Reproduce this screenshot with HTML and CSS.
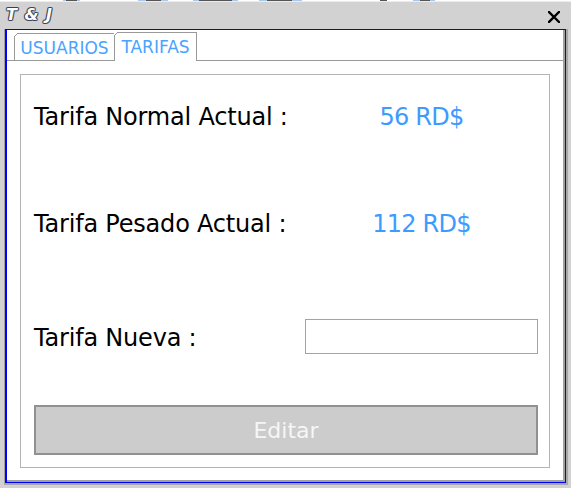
FILE: index.html
```html
<!DOCTYPE html>
<html>
<head>
<meta charset="utf-8">
<link rel="stylesheet" href="styles.css">
</head>
<body>
<div class="desk"></div>
<div class="window">
  <div class="titlebar">
    <span class="title">T &amp; J</span>
    <svg class="close" width="12" height="12" viewBox="0 0 12 12"><path d="M1 1 L11 11 M11 1 L1 11" stroke="#000" stroke-width="2.4" stroke-linecap="square"/></svg>
  </div>
  <div class="frame">
    <div class="client">
      <div class="pane">
        <div class="tabs">
          <div class="tab tab-users">USUARIOS</div>
          <div class="tab tab-rates active">TARIFAS</div>
        </div>
        <div class="panel">
          <div class="row row1">
            <span class="label">Tarifa Normal Actual :</span>
            <span class="value">56 RD$</span>
          </div>
          <div class="row row2">
            <span class="label">Tarifa Pesado Actual :</span>
            <span class="value">112 RD$</span>
          </div>
          <div class="row row3">
            <span class="label label-low">Tarifa Nueva :</span>
            <input class="field" type="text">
          </div>
          <button class="btn">Editar</button>
        </div>
      </div>
    </div>
  </div>
</div>
</body>
</html>
```
FILE: styles.css
```css
html, body {
  margin: 0;
  padding: 0;
  width: 571px;
  height: 488px;
  overflow: hidden;
  background: #d2d2d2;
  font-family: "DejaVu Sans", sans-serif;
}
.desk {
  height: 1px;
  background: linear-gradient(to right,
    #fff 0 63px, #a9c9ea 63px 66px, #555 66px 77px, #a9c9ea 77px 80px,
    #fff 80px 138px, #a9c9ea 138px 146px, #555 146px 161px, #a9c9ea 161px 168px,
    #fff 168px 193px, #a9c9ea 193px 199px, #555 199px 232px, #a9c9ea 232px 238px,
    #fff 238px 259px, #a9c9ea 259px 267px, #555 267px 292px, #a9c9ea 292px 302px,
    #fff 302px 380px, #555 380px 387px, #fff 387px 413px,
    #a9c9ea 413px 420px, #555 420px 430px, #a9c9ea 430px 435px, #fff 435px);
}
.window {
  height: 487px;
  background: #d2d2d2;
}
.titlebar {
  height: 27px;
  border-top: 1px solid #ececec;
  display: flex;
  justify-content: space-between;
  align-items: flex-start;
  background: #d2d2d2;
}
.title {
  margin: 3px 0 0 6px;
  font-family: "DejaVu Sans", sans-serif;
  font-weight: bold;
  font-style: italic;
  font-size: 16px;
  letter-spacing: 1px;
  color: #fff;
  text-shadow: 1px 0 0 #3a4050, -1px 0 0 #3a4050, 0 1px 0 #3a4050, 0 -1px 0 #3a4050,
               1px 1px 0 #7a8aa8, -1px -1px 0 #7a8aa8, 1px -1px 0 #7a8aa8, -1px 1px 0 #7a8aa8;
}
.close {
  margin: 9px 11px 0 0;
  display: block;
}
.frame {
  margin: 0 3px 0 4px;
  border-left: 1px solid #a0a0a0;
  border-right: 2px solid #a8a8a8;
  border-bottom: 2px solid #a8a8a8;
}
.client {
  border: 1px solid #0000ff;
  border-left-width: 2px;
}
.pane {
  height: 450px;
  background: #fff;
  border-right: 2px solid #a0a0a0;
  border-bottom: 2px solid #a0a0a0;
  display: flex;
  flex-direction: column;
}
.tabs {
  height: 28px;
  padding: 2px 0 0 7px;
  border-bottom: 1px solid #999;
  display: flex;
  align-items: flex-end;
}
.tab {
  position: relative;
  box-sizing: border-box;
  height: 27px;
  border: 1px solid #999;
  border-bottom: none;
  background: #fff;
  color: #4aa3ff;
  font-size: 17px;
  display: flex;
  justify-content: center;
  align-items: center;
  padding-top: 2px;
}
.tab::before {
  content: "";
  position: absolute;
  top: -1px;
  left: -1px;
  width: 4px;
  height: 4px;
  background: linear-gradient(135deg, #fff 0 42%, #999 42% 62%, transparent 62%);
}
.tab-users {
  width: 101px;
}
.tab-rates {
  width: 83px;
  margin-left: -1px;
}
.tab.active {
  height: 29px;
  margin-bottom: -1px;
  padding-top: 0;
}
.panel {
  flex: 1;
  margin: 13px 13px 12px 13px;
  border: 1px solid #b4b4b4;
  padding: 0 11px 0 13px;
  display: flex;
  flex-direction: column;
}
.row {
  height: 50px;
  display: grid;
  grid-template-columns: 271px 233px;
  align-items: center;
}
.row1 { margin-top: 17px; }
.row2 { margin-top: 57px; }
.row3 { margin-top: 62px; }
.label {
  font-size: 24px;
  letter-spacing: -0.2px;
  color: #000;
  white-space: nowrap;
}
.label-low {
  padding-top: 4px;
}
.value {
  font-size: 24px;
  letter-spacing: -0.8px;
  color: #3d9bff;
  text-align: center;
  white-space: nowrap;
}
.field {
  box-sizing: border-box;
  width: 233px;
  height: 35px;
  margin: 0;
  padding: 0;
  border: 1px solid #a3a3a3;
  background: #fff;
  outline: none;
}
.btn {
  box-sizing: border-box;
  margin-top: 44px;
  height: 50px;
  width: 100%;
  border: 2px solid #919191;
  background: #cccccc;
  color: #f6f6f6;
  font-family: "DejaVu Sans", sans-serif;
  font-size: 22px;
  padding: 0;
}
```
